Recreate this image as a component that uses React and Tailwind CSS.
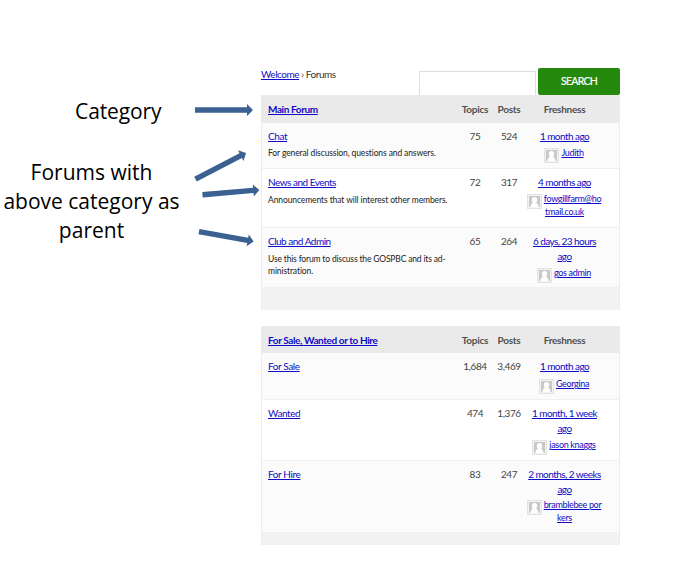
const link = 'text-[#100bc4] underline decoration-1 underline-offset-1 whitespace-nowrap';

function Avatar() {
  return (
    <svg width="15" height="15" viewBox="0 0 15 15" className="mt-px shrink-0">
      <rect x="0.5" y="0.5" width="14" height="14" fill="#f3f3f3" stroke="#e2e2e2" />
      <rect x="2" y="2" width="11" height="11" fill="#c8c8c8" />
      <path d="M7.500 3c1.900 0 2.800 1.300 2.700 2.900c0 1-.5 1.900-1 2.400c0 1 2.200 1.200 2.400 4.700H3.400c.1-3.500 2.400-3.700 2.400-4.700C5.300 7.800 4.800 6.900 4.800 5.900C4.700 4.300 5.600 3 7.500 3z" fill="#fff" />
    </svg>
  );
}

function Freshness({ time, author, gap = 'mt-[3px]' }) {
  return (
    <div className="flex flex-col items-center pt-[6px] leading-[15px]">
      {time.map((text) => (
        <a key={text} className={`${link} text-[10px] tracking-[-0.55px]`}>{text}</a>
      ))}
      <div className={`-ml-px flex items-start gap-[2px] ${gap}`}>
        <Avatar />
        <a className={`${link} text-[9px] leading-[12px] tracking-[-0.33px]`}>{author[0]}</a>
      </div>
      {author[1] && (
        <a className={`${link} -mt-[3px] text-[9px] leading-[12px] tracking-[-0.33px]`}>{author[1]}</a>
      )}
    </div>
  );
}

function Row({ height, bg, name, nameSpacing = 'tracking-[-0.4px]', desc = [], descGap = 'mt-[3px]', topics, posts, time, author, gap }) {
  return (
    <div className={`grid grid-cols-[196px_34px_34px_77px] border-b border-[#f0f0f0] ${height} ${bg}`}>
      <div className="pt-[6px] pl-[6px]">
        <a className={`${link} ${nameSpacing} block w-fit text-[10px] leading-[15px]`}>{name}</a>
        <div className={descGap}>
          {desc.map(([text, spacing]) => (
            <p key={text} className={`${spacing} whitespace-nowrap text-[8.5px] leading-[12px] text-[#222]`}>{text}</p>
          ))}
        </div>
      </div>
      <span className="pt-[6px] text-center text-[10px] leading-[15px] tracking-[-0.4px] text-[#444]">{topics}</span>
      <span className="pt-[6px] text-center text-[10px] leading-[15px] tracking-[-0.4px] text-[#444]">{posts}</span>
      <Freshness time={time} author={author} gap={gap} />
    </div>
  );
}

function Forum({ title, footer, head, children }) {
  return (
    <section className="w-[359px] border-x border-[#ececec]">
      <header className={`grid grid-cols-[196px_34px_34px_77px] items-center bg-[#eaeaea] text-[10px] font-bold leading-[15px] tracking-[-0.25px] text-[#505050] ${head}`}>
        <span className="pl-[6px]"><a className={`${link} tracking-[-0.4px]`}>{title}</a></span>
        <span className="text-center">Topics</span>
        <span className="text-center">Posts</span>
        <span className="text-center">Freshness</span>
      </header>
      {children}
      <div className={`bg-[#f2f2f2] ${footer}`} />
    </section>
  );
}

function Arrow({ x, y, length, angle }) {
  return (
    <g transform={`translate(${x} ${y}) rotate(${angle})`}>
      <path d={`M0 -2.700H${length - 6}V-6L${length} 0L${length - 6} 6V2.700H0z`} fill="#3a6191" />
    </g>
  );
}

function Annotations() {
  return (
    <aside className="relative h-[573px] w-[261px] shrink-0 font-['Open_Sans',sans-serif] text-[21px] leading-[29px] text-black">
      <p className="ml-[75px] pt-[97px] tracking-[-0.1px] whitespace-nowrap">Category</p>
      <div className="mt-[32px] w-[183px] text-center whitespace-nowrap">
        <p>Forums with</p>
        <p>above category as</p>
        <p>parent</p>
      </div>
      <svg className="absolute inset-0" width="261" height="573" viewBox="0 0 261 573">
        <Arrow x={195} y={110} length={58} angle={0} />
        <Arrow x={195.500} y={179.200} length={57} angle={-27.500} />
        <Arrow x={202.500} y={194.700} length={57} angle={-4.800} />
        <Arrow x={199} y={231.700} length={55.500} angle={10.200} />
      </svg>
    </aside>
  );
}

export default function App() {
  return (
    <div className="flex h-[573px] w-[673px] overflow-hidden bg-white">
      <Annotations />
      <main className="w-[359px] font-['Lato',sans-serif]">
        <div className="flex h-[95px] items-end justify-between">
          <p className="mb-[13px] whitespace-nowrap text-[10px] leading-[15px] tracking-[-0.45px] text-[#333]">
            <a className={link}>Welcome</a> › Forums
          </p>
          <div className="flex items-end">
            <div className="mr-[2px] h-[24px] w-[117px] border border-b-0 border-[#dedede] bg-white" />
            <button className="h-[27px] w-[82px] rounded-[2px] bg-[#25890d] text-[10.5px] leading-[25px] tracking-[-0.7px] text-white [-webkit-text-stroke:0.2px_#fff]">SEARCH</button>
          </div>
        </div>
        <Forum title="Main Forum" head="h-[28px]" footer="h-[22px]">
          <Row height="h-[46px]" bg="bg-[#fbfbfb]" name="Chat"
            desc={[['For general discussion, questions and answers.', 'tracking-[-0.11px]']]}
            topics="75" posts="524" time={['1 month ago']} author={['Judith']} />
          <Row height="h-[59px]" bg="bg-white" name="News and Events" nameSpacing="tracking-[-0.5px]" descGap="mt-[4px]"
            desc={[['Announcements that will interest other members.', 'tracking-[-0.1px]']]}
            topics="72" posts="317" time={['4 months ago']} author={['fowgillfarm@ho', 'tmail.co.uk']} />
          <Row height="h-[60px]" bg="bg-[#fbfbfb]" name="Club and Admin" nameSpacing="tracking-[-0.5px]" descGap="mt-[4px]"
            desc={[['Use this forum to discuss the GOSPBC and its ad-', 'tracking-[-0.16px]'], ['ministration.', 'tracking-[-0.1px]']]}
            topics="65" posts="264" time={['6 days, 23 hours', 'ago']} author={['gos admin']} />
        </Forum>
        <div className="h-[16px]" />
        <Forum title="For Sale, Wanted or to Hire" head="h-[27px] pt-[2px]" footer="h-[12px]">
          <Row height="h-[47px]" bg="bg-[#fbfbfb]" name="For Sale" topics="1,684" posts="3,469"
            time={['1 month ago']} author={['Georgina']} gap="mt-[4px]" />
          <Row height="h-[61px]" bg="bg-white" name="Wanted" topics="474" posts="1,376"
            time={['1 month, 1 week', 'ago']} author={['jason knaggs']} />
          <Row height="h-[72px]" bg="bg-[#fbfbfb]" name="For Hire" topics="83" posts="247"
            time={['2 months, 2 weeks', 'ago']} author={['bramblebee por', 'kers']} gap="mt-[2px]" />
        </Forum>
      </main>
    </div>
  );
}
